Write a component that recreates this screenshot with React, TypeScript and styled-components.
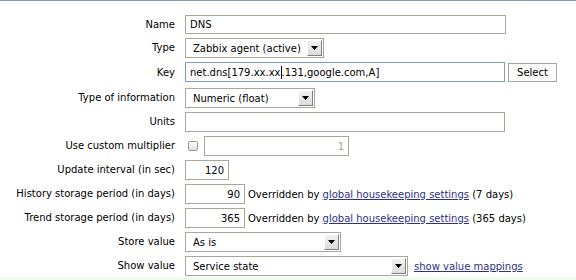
import React from "react";
import styled, { createGlobalStyle } from "styled-components";

const Global = createGlobalStyle`
  html, body { margin: 0; padding: 0; background: #fff; }
  body { font-family: "DejaVu Sans", Verdana, sans-serif; font-size: 10px; color: #000; }
`;

const Page = styled.div`
  border-top: 1px solid #7f9db9;
  padding-top: 14px;
  width: 576px;
  height: 279px;
  overflow: hidden;
  display: flex;
  flex-direction: column;
`;

const Form = styled.div`
  display: grid;
  grid-template-columns: 175px 1fr;
  column-gap: 10px;
  row-gap: 4px;
`;

const Label = styled.div`
  text-align: right;
  align-self: center;
  white-space: nowrap;
  line-height: 12px;
`;

const Cell = styled.div<{ $h?: number }>`
  display: flex;
  align-items: center;
  min-height: ${(p) => p.$h ?? 20}px;
  white-space: nowrap;
`;

const KeyCell = styled(Cell)`
  align-items: flex-start;
`;

const TextField = styled.div<{ $w: number; $h?: number; $right?: boolean; $focus?: boolean; $disabled?: boolean }>`
  box-sizing: border-box;
  width: ${(p) => p.$w}px;
  height: ${(p) => p.$h ?? 20}px;
  border: 1px solid ${(p) => (p.$focus ? "#7f9db9" : "#a9a79a")};
  background: #fff;
  display: flex;
  align-items: center;
  justify-content: ${(p) => (p.$right ? "flex-end" : "flex-start")};
  padding: 0 4px;
  color: ${(p) => (p.$disabled ? "#a0a0a0" : "#000")};
  overflow: hidden;
  white-space: nowrap;
`;

const Caret = styled.span`
  display: inline-block;
  width: 1px;
  height: 13px;
  background: #000;
`;

const SelectBox = styled.div<{ $w: number }>`
  box-sizing: border-box;
  width: ${(p) => p.$w}px;
  height: 20px;
  border: 1px solid #a9a79a;
  background: #fff;
  display: flex;
  align-items: center;
  padding: 0 1px 0 7px;
`;

const SelectText = styled.span`
  flex: 1;
  overflow: hidden;
`;

const ArrowButton = styled.span`
  box-sizing: border-box;
  width: 15px;
  height: 16px;
  background: linear-gradient(#f2f2f2, #dcdcdc);
  border-top: 1px solid #fff;
  border-left: 1px solid #fff;
  border-right: 1px solid #808080;
  border-bottom: 1px solid #808080;
  display: flex;
  align-items: center;
  justify-content: center;
`;

const Button = styled.div`
  box-sizing: border-box;
  width: 49px;
  height: 19px;
  margin: 1px 0 0 3px;
  border: 1px solid #a9a79a;
  background: #fbfbfb;
  display: flex;
  align-items: center;
  justify-content: center;
`;

const Check = styled.span`
  box-sizing: border-box;
  width: 10px;
  height: 10px;
  margin: 0 6px 0 3px;
  border: 1px solid #9a9a9a;
  border-radius: 2px;
  background: linear-gradient(#fff, #dedede);
`;

const Note = styled.span`
  margin-left: 3px;
`;

const Link = styled.a`
  color: #2f2f8c;
  text-decoration: underline;
`;

const SideLink = styled(Link)`
  margin-left: 6px;
`;

const Footer = styled.div`
  margin-top: 1px;
  flex: 1;
  background: #effbec;
`;

const Arrow = () => (
  <svg width="7" height="4" viewBox="0 0 7 4">
    <path d="M0 0h7L3.5 4z" fill="#000" />
  </svg>
);

const Select = ({ w, text }: { w: number; text: string }) => (
  <SelectBox $w={w}>
    <SelectText>{text}</SelectText>
    <ArrowButton>
      <Arrow />
    </ArrowButton>
  </SelectBox>
);

export default function App() {
  return (
    <>
      <Global />
      <Page>
        <Form>
          <Label>Name</Label>
          <Cell $h={19}>
            <TextField $w={321} $h={19}>DNS</TextField>
          </Cell>

          <Label>Type</Label>
          <Cell>
            <Select w={139} text="Zabbix agent (active)" />
          </Cell>

          <Label>Key</Label>
          <KeyCell $h={22}>
            <TextField $w={320} $focus>
              net.dns[179.xx.xx<Caret />.131,google.com,A]
            </TextField>
            <Button>Select</Button>
          </KeyCell>

          <Label>Type of information</Label>
          <Cell>
            <Select w={130} text="Numeric (float)" />
          </Cell>

          <Label>Units</Label>
          <Cell>
            <TextField $w={320} />
          </Cell>

          <Label>Use custom multiplier</Label>
          <Cell>
            <Check />
            <TextField $w={145} $right $disabled>1</TextField>
          </Cell>

          <Label>Update interval (in sec)</Label>
          <Cell>
            <TextField $w={44} $right>120</TextField>
          </Cell>

          <Label>History storage period (in days)</Label>
          <Cell>
            <TextField $w={60} $right>90</TextField>
            <Note>
              Overridden by <Link href="#">global housekeeping settings</Link> (7 days)
            </Note>
          </Cell>

          <Label>Trend storage period (in days)</Label>
          <Cell>
            <TextField $w={60} $right>365</TextField>
            <Note>
              Overridden by <Link href="#">global housekeeping settings</Link> (365 days)
            </Note>
          </Cell>

          <Label>Store value</Label>
          <Cell>
            <Select w={156} text="As is" />
          </Cell>

          <Label>Show value</Label>
          <Cell>
            <Select w={223} text="Service state" />
            <SideLink href="#">show value mappings</SideLink>
          </Cell>
        </Form>
        <Footer />
      </Page>
    </>
  );
}
